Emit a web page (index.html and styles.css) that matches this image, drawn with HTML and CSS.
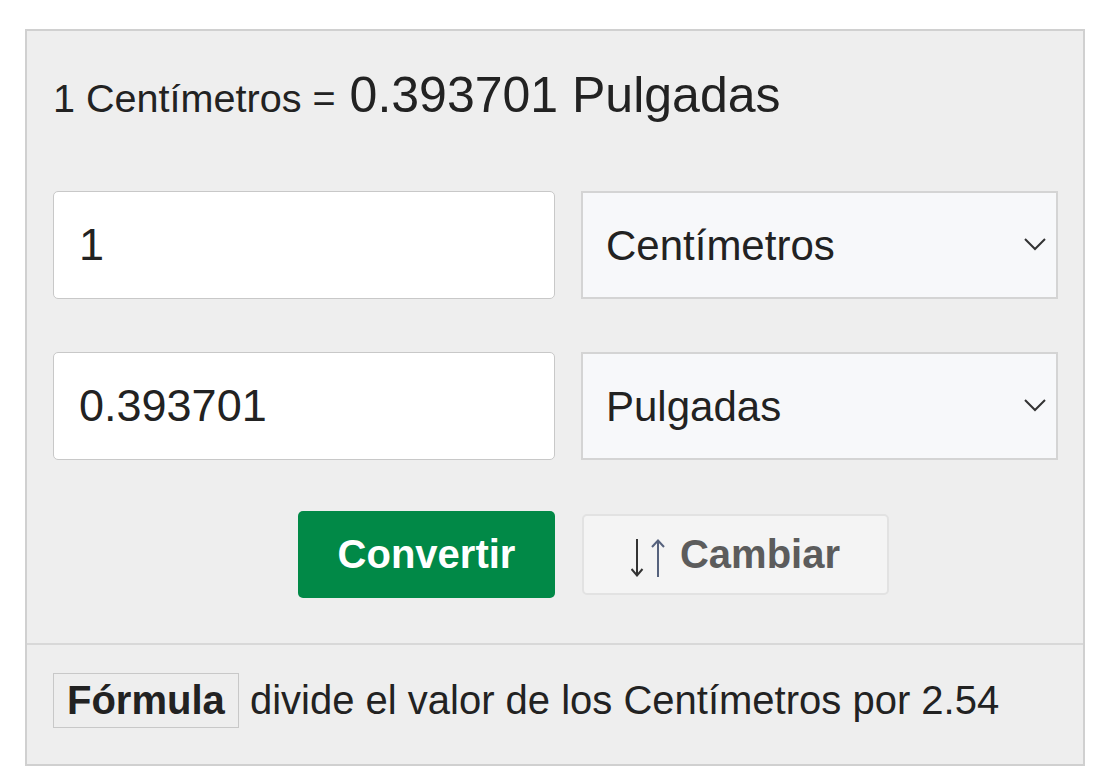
FILE: index.html
```html
<!DOCTYPE html>
<html>
  <head>
    <title>Centímetros a Pulgadas</title>
    <link rel="stylesheet" href="styles.css">
  </head>
  <body>
    <div class="converter">
      <div class="converter-main">
        <p class="result">
          <span class="result-from">1 Centímetros =</span>
          <span class="result-to">0.393701 Pulgadas</span>
        </p>
        <form class="fields">
          <input class="value" type="text" value="1" />
          <div class="unit">
            <select>
              <option>Centímetros</option>
            </select>
            <svg class="chevron" width="22" height="13" viewBox="0 0 22 13">
              <path d="M1 1 L11 11 L21 1" fill="none" stroke="#333" stroke-width="2" />
            </svg>
          </div>
          <input class="value" type="text" value="0.393701" />
          <div class="unit">
            <select>
              <option>Pulgadas</option>
            </select>
            <svg class="chevron" width="22" height="13" viewBox="0 0 22 13">
              <path d="M1 1 L11 11 L21 1" fill="none" stroke="#333" stroke-width="2" />
            </svg>
          </div>
          <button type="submit" class="btn-convert">Convertir</button>
          <button type="button" class="btn-swap">
            <svg class="swap-icon" width="36" height="38" viewBox="0 0 36 38">
              <path d="M6 0 V36 M0.5 30 L6 36.5 L11.5 30" fill="none" stroke="#333" stroke-width="2" />
              <path d="M27 38 V2 M21 8 L27 1.5 L33 8" fill="none" stroke="#56627d" stroke-width="2" />
            </svg>
            <span>Cambiar</span>
          </button>
        </form>
      </div>
      <div class="formula">
        <span class="formula-label">Fórmula</span> divide el valor de los Centímetros por 2.54
      </div>
    </div>
  </body>
</html>
```

FILE: styles.css
```css
body {
  margin: 0;
  font-family: "Liberation Sans", Arial, sans-serif;
  color: #222;
}
.converter {
  width: 1060px;
  margin: 29px 0 0 25px;
  box-sizing: border-box;
  border: 2px solid #d0d0d0;
  background: #eeeeee;
}
.converter-main {
  padding: 35px 25px 45px 26px;
  border-bottom: 2px solid #d8d8d8;
}
.result {
  margin: 0 0 67px;
  font-size: 50px;
}
.result-from {
  font-size: 39.6px;
}
.fields {
  display: grid;
  grid-template-columns: 502px 477px;
  column-gap: 26px;
  row-gap: 53px;
  align-items: center;
}
input,
select,
button {
  font-family: inherit;
  box-sizing: border-box;
}
.value {
  height: 108px;
  padding: 0 25px;
  border: 1px solid #c8c8c8;
  border-radius: 5px;
  background: #fff;
  font-size: 45px;
  color: #222;
}
.unit {
  position: relative;
}
.unit select {
  width: 100%;
  height: 108px;
  padding: 0 23px;
  border: 2px solid #d4d4d4;
  border-radius: 0;
  background: #f7f8fa;
  font-size: 42px;
  color: #222;
  appearance: none;
  -webkit-appearance: none;
}
.chevron {
  position: absolute;
  right: 12px;
  top: 47px;
}
.btn-convert {
  justify-self: end;
  width: 257px;
  height: 87px;
  margin-top: -2px;
  border: none;
  border-radius: 5px;
  background: #018947;
  color: #fff;
  font-size: 40px;
  font-weight: bold;
  cursor: pointer;
}
.btn-swap {
  justify-self: start;
  display: flex;
  align-items: center;
  justify-content: center;
  gap: 13px;
  width: 307px;
  height: 81px;
  margin-top: -2px;
  margin-left: 1px;
  border: 2px solid #e2e2e2;
  border-radius: 5px;
  background: #f4f4f4;
  color: #5c5c5c;
  font-size: 40px;
  font-weight: bold;
  cursor: pointer;
}
.swap-icon {
  margin-top: 6px;
}
.formula {
  padding: 28px 26px 36px;
  font-size: 40px;
  color: #222;
}
.formula-label {
  display: inline-block;
  padding: 4px 13px;
  border: 1px solid #c8c8c8;
  font-weight: bold;
}
```
